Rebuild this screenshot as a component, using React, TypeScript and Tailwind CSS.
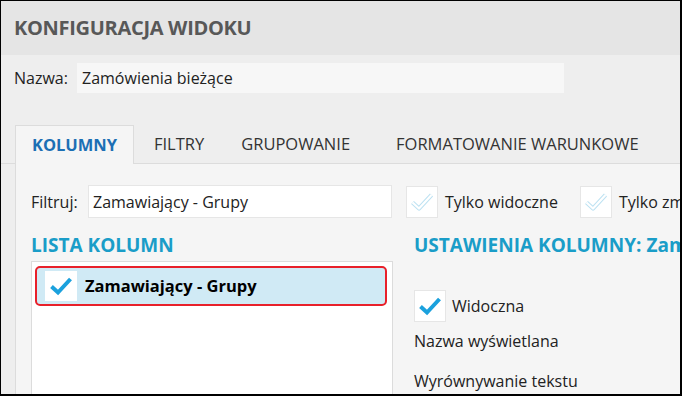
function CheckMark({ faint }: { faint?: boolean }) {
  if (faint) {
    return (
      <svg width="24" height="20" viewBox="0 0 24 20">
        <path d="M2.5 10.5 L9 16.5 L21.5 3" fill="none" stroke="#bde2f2" strokeWidth="4.2" strokeLinejoin="round" />
        <path d="M2.5 10.5 L9 16.5 L21.5 3" fill="none" stroke="#ffffff" strokeWidth="2.2" strokeLinejoin="round" />
      </svg>
    )
  }
  return (
    <svg width="24" height="20" viewBox="0 0 24 20">
      <path d="M2.5 10.5 L9 16.5 L21.5 3" fill="none" stroke="#1ba1dd" strokeWidth="4" />
    </svg>
  )
}

function Check({ faint }: { faint?: boolean }) {
  return (
    <span className="flex h-[32px] w-[32px] shrink-0 items-center justify-center border border-[#e6e6e6] bg-white">
      <CheckMark faint={faint} />
    </span>
  )
}

export default function App() {
  const tabs = [
    { label: "FILTRY", cls: "ml-[20px]" },
    { label: "GRUPOWANIE", cls: "ml-[37px]" },
    { label: "FORMATOWANIE WARUNKOWE", cls: "ml-[46px]" },
  ]

  return (
    <div
      className="flex h-[396px] w-[682px] flex-col overflow-hidden border-l border-t border-r-2 border-b-2 border-black bg-[#eeeeee] text-[16px] text-[#222]"
      style={{ fontFamily: '"Open Sans", "Noto Sans", sans-serif' }}
    >
      <div className="flex h-[54px] shrink-0 items-center bg-[#e5e5e5] pl-[13px]">
        <h1 className="whitespace-nowrap text-[20px] font-bold tracking-[-0.3px] text-[#585858]">
          KONFIGURACJA WIDOKU
        </h1>
      </div>

      <div className="flex shrink-0 items-center pl-[13px] pt-[8px]">
        <span className="w-[63px] shrink-0">Nazwa:</span>
        <div className="flex h-[30px] w-[487px] shrink-0 items-center bg-[#f7f7f7] px-[5px] whitespace-nowrap">
          Zamówienia bieżące
        </div>
      </div>

      <div className="mt-[32px] flex h-[39px] shrink-0 items-stretch border-b border-[#dcdcdc] pl-[14px]">
        <div className="-mb-px flex w-[119px] shrink-0 items-center justify-center border border-b-0 border-[#dcdcdc] bg-[#f5f5f5] text-[16.5px] font-bold text-[#1c6fb4]">
          KOLUMNY
        </div>
        {tabs.map((t) => (
          <div
            key={t.label}
            className={`${t.cls} flex shrink-0 items-center whitespace-nowrap text-[16.5px] text-[#333]`}
          >
            {t.label}
          </div>
        ))}
      </div>

      <div className="ml-[14px] flex min-h-0 flex-1 flex-col overflow-hidden border-l border-[#dcdcdc] bg-[#f5f5f5] pl-[15px]">
        <div className="flex shrink-0 items-center pt-[21px]">
          <span className="w-[57px] shrink-0">Filtruj:</span>
          <div className="flex h-[33px] w-[304px] shrink-0 items-center border border-[#e6e6e6] bg-white px-[4px] whitespace-nowrap">
            Zamawiający - Grupy
          </div>
          <div className="ml-[14px] flex shrink-0 items-center gap-[7px]">
            <Check faint />
            <span className="whitespace-nowrap">Tylko widoczne</span>
          </div>
          <div className="ml-[22px] flex shrink-0 items-center gap-[7px]">
            <Check faint />
            <span className="whitespace-nowrap">Tylko zmienione</span>
          </div>
        </div>

        <div className="mt-[16px] flex min-h-0 flex-1">
          <div className="flex w-[362px] shrink-0 flex-col">
            <h2 className="h-[27px] shrink-0 whitespace-nowrap text-[19px] leading-[22px] font-bold text-[#1a9dc8]">
              LISTA KOLUMN
            </h2>
            <div className="flex-1 border border-b-0 border-[#dcdcdc] bg-white pl-[3px] pr-[5px] pt-[4px]">
              <div className="flex h-[40px] items-center rounded-[5px] border-2 border-[#e8202a] bg-[#d0eaf5] pl-[8px]">
                <span className="flex h-[30px] w-[32px] shrink-0 items-center justify-center bg-white">
                  <CheckMark />
                </span>
                <span className="ml-[8px] whitespace-nowrap text-[16.5px] font-bold text-black">
                  Zamawiający - Grupy
                </span>
              </div>
            </div>
          </div>

          <div className="ml-[21px] flex shrink-0 flex-col">
            <h2 className="h-[27px] whitespace-nowrap text-[19px] leading-[22px] font-bold text-[#1a9dc8]">
              USTAWIENIA KOLUMNY: Zamawiający - Grupy
            </h2>
            <div className="mt-[29px] flex items-center gap-[6px]">
              <Check />
              <span>Widoczna</span>
            </div>
            <div className="mt-[7px] whitespace-nowrap">Nazwa wyświetlana</div>
            <div className="mt-[16px] whitespace-nowrap">Wyrównywanie tekstu</div>
          </div>
        </div>
      </div>
    </div>
  )
}
